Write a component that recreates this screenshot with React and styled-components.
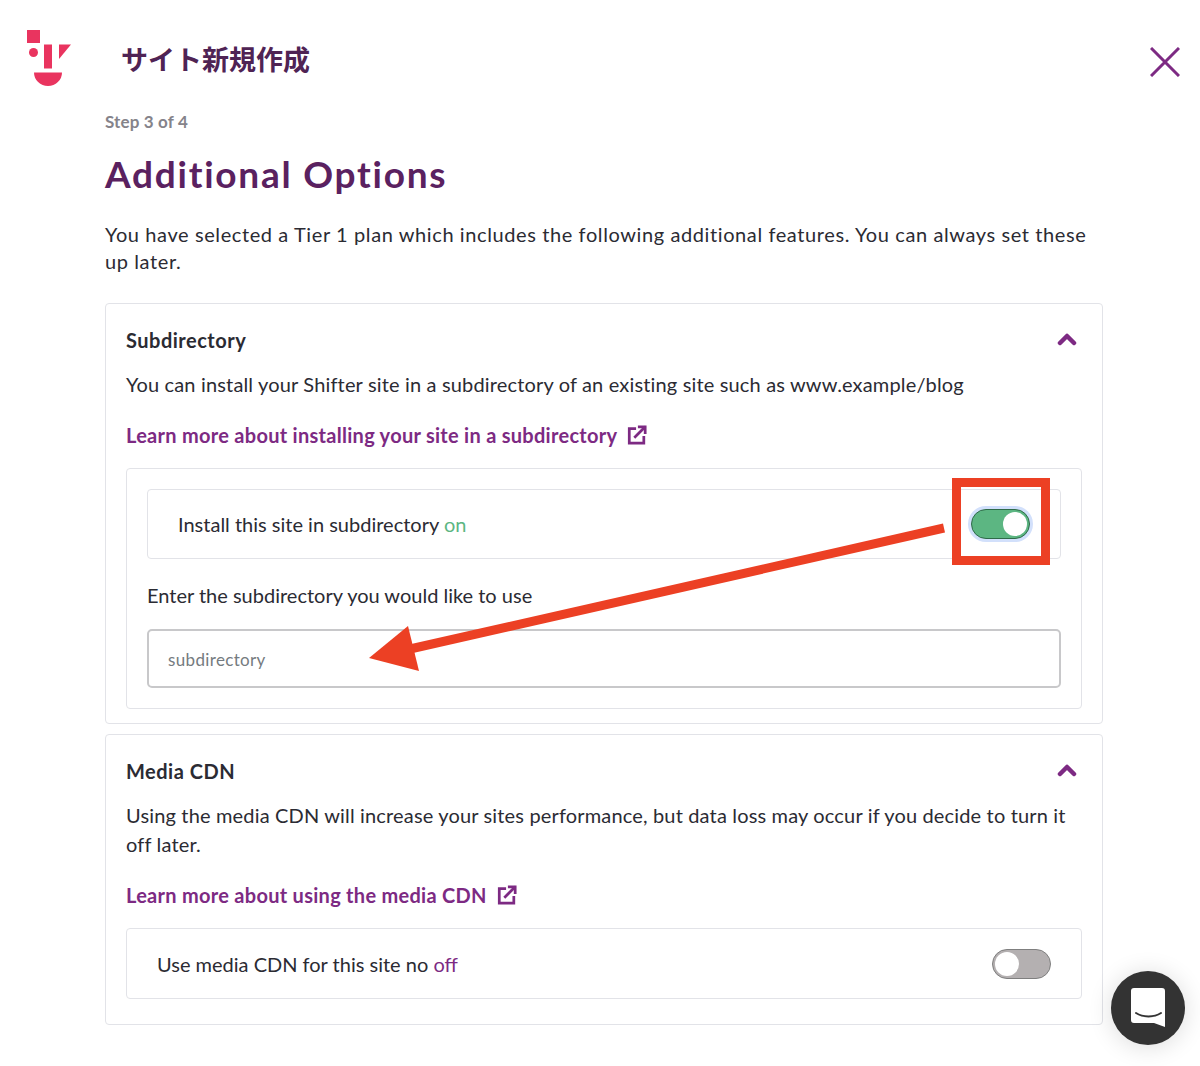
import React from "react";
import styled, { createGlobalStyle } from "styled-components";

const Global = createGlobalStyle`
  html, body { margin: 0; padding: 0; background: #fff; }
  * { box-sizing: border-box; }
`;

const Page = styled.div`
  position: relative;
  width: 1200px;
  height: 1066px;
  overflow: hidden;
  font-family: "Lato", "Noto Sans CJK JP", sans-serif;
  color: #2b2b33;
`;

const Header = styled.header`
  display: flex;
  align-items: flex-start;
  padding: 30px 20px 0 27px;
  height: 110px;
`;

const Logo = styled.svg`
  width: 44px;
  height: 56px;
  flex: none;
`;

const SiteTitle = styled.div`
  margin: 11px 0 0 50px;
  font-family: "Noto Sans CJK JP", sans-serif;
  font-size: 27px;
  line-height: 36px;
  font-weight: 700;
  color: #4f2354;
  flex: 1;
`;

const Close = styled.svg`
  width: 30px;
  height: 30px;
  margin-top: 17px;
  flex: none;
`;

const Main = styled.main`
  width: 998px;
  margin-left: 105px;
`;

const Step = styled.div`
  font-size: 17px;
  line-height: 24px;
  font-weight: 700;
  letter-spacing: 0.15px;
  color: #85838a;
`;

const Title = styled.h1`
  margin: 14px 0 0;
  font-size: 37px;
  line-height: 52px;
  font-weight: 700;
  letter-spacing: 1.75px;
  color: #5a2160;
`;

const Intro = styled.p`
  margin: 21px 0 28px;
  font-size: 20px;
  line-height: 27px;
  letter-spacing: 0.6px;
`;

const Card = styled.section`
  border: 1px solid #e2e3e8;
  border-radius: 4px;
  padding: 20px;
  height: ${(p) => p.$height}px;
  margin-bottom: 10px;
`;

const CardHead = styled.div`
  display: flex;
  align-items: center;
  justify-content: space-between;
  height: 32px;
`;

const CardTitle = styled.h2`
  margin: 0;
  font-size: 20px;
  line-height: 32px;
  font-weight: 700;
  letter-spacing: 0.5px;
`;

const Chevron = styled.svg`
  width: 22px;
  height: 14px;
  margin: -3px 4px 0 0;
`;

const Text = styled.p`
  margin: 14px 0 0;
  font-size: 20px;
  line-height: 29px;
  letter-spacing: 0.16px;
`;

const LearnLink = styled.a`
  display: flex;
  align-items: center;
  gap: 10px;
  margin-top: 21px;
  font-size: 20px;
  line-height: 30px;
  font-weight: 700;
  letter-spacing: 0.28px;
  color: #7d2a83;
`;

const Box = styled.div`
  border: 1px solid #e2e3e8;
  border-radius: 4px;
  margin-top: 18px;
  padding: ${(p) => (p.$flat ? "0" : "20px")};
`;

const ToggleRow = styled.div`
  display: flex;
  align-items: center;
  justify-content: space-between;
  height: ${(p) => (p.$flat ? "69px" : "70px")};
  padding: 0 30px;
  border: ${(p) => (p.$flat ? "0" : "1px solid #e2e3e8")};
  border-radius: 4px;
  font-size: 20px;
`;

const State = styled.span`
  color: ${(p) => p.$color};
`;

const Switch = styled.div`
  position: relative;
  width: 59px;
  height: 30px;
  border-radius: 15px;
  border: 1px solid ${(p) => (p.$on ? "#2f6b49" : "#7f7f7f")};
  background: ${(p) => (p.$on ? "#5cb682" : "#b4b0b1")};
  box-shadow: ${(p) => (p.$on ? "0 0 0 3px #d2e0fb" : "none")};
  flex: none;
`;

const Knob = styled.div`
  position: absolute;
  top: 2px;
  ${(p) => (p.$on ? "right: 2px;" : "left: 2px;")}
  width: 24px;
  height: 24px;
  border-radius: 50%;
  background: #fff;
`;

const FieldLabel = styled.div`
  margin-top: 21px;
  font-size: 20px;
  line-height: 30px;
`;

const Input = styled.input`
  display: block;
  width: 100%;
  height: 59px;
  margin-top: 19px;
  padding: 2px 19px 0;
  border: 2px solid #c8c8ca;
  border-radius: 5px;
  font-family: inherit;
  font-size: 17px;
  letter-spacing: 0.35px;
  &::placeholder { color: #757b80; opacity: 1; }
`;

const RedFrame = styled.div`
  position: absolute;
  left: 952px;
  top: 478px;
  width: 98px;
  height: 87px;
  border: 9px solid #ec4024;
`;

const Arrow = styled.svg`
  position: absolute;
  left: 360px;
  top: 520px;
  width: 600px;
  height: 160px;
`;

const Chat = styled.div`
  position: absolute;
  left: 1111px;
  top: 971px;
  width: 74px;
  height: 74px;
  border-radius: 50%;
  background: #333;
  box-shadow: 0 2px 24px rgba(0, 0, 0, 0.14);
  display: flex;
  align-items: center;
  justify-content: center;
`;

const ChatIcon = styled.svg`
  width: 36px;
  height: 40px;
`;

const ExternalIcon = () => (
  <svg width="20" height="20" viewBox="0 0 22 22" fill="none" stroke="#7d2a83" strokeWidth="3">
    <path d="M10 4H2.500v16h16v-8" />
    <path d="M8 14 20 2" />
    <path d="M12 2h8v8" />
  </svg>
);

const Up = () => (
  <Chevron viewBox="0 0 22 14" fill="none" stroke="#7d2a83" strokeWidth="4.500" strokeLinecap="round" strokeLinejoin="round">
    <path d="M4 11 11 4l7 7" />
  </Chevron>
);

export default function App() {
  return (
    <Page>
      <Global />
      <Header>
        <Logo viewBox="0 0 44 56">
          <rect width="13" height="13" fill="#e9345f" />
          <circle cx="6.500" cy="22.500" r="4.500" fill="#e9345f" />
          <rect x="17" y="14.500" width="8" height="24" fill="#e9345f" />
          <path d="M32 14.500h12L32 29z" fill="#e9345f" />
          <path d="M7 42.500h28a14 13.500 0 0 1-28 0z" fill="#e9345f" />
        </Logo>
        <SiteTitle>サイト新規作成</SiteTitle>
        <Close viewBox="0 0 30 30" stroke="#7d2a83" strokeWidth="3" fill="none">
          <path d="M1 1l28 28M29 1 1 29" />
        </Close>
      </Header>
      <Main>
        <Step>Step 3 of 4</Step>
        <Title>Additional Options</Title>
        <Intro>
          You have selected a Tier 1 plan which includes the following additional features. You can always set these up later.
        </Intro>
        <Card $height={421}>
          <CardHead>
            <CardTitle>Subdirectory</CardTitle>
            <Up />
          </CardHead>
          <Text>You can install your Shifter site in a subdirectory of an existing site such as www.example/blog</Text>
          <LearnLink>
            Learn more about installing your site in a subdirectory
            <ExternalIcon />
          </LearnLink>
          <Box>
            <ToggleRow>
              <span>
                Install this site in subdirectory <State $color="#5cb682">on</State>
              </span>
              <Switch $on>
                <Knob $on />
              </Switch>
            </ToggleRow>
            <FieldLabel>Enter the subdirectory you would like to use</FieldLabel>
            <Input placeholder="subdirectory" />
          </Box>
        </Card>
        <Card $height={291}>
          <CardHead>
            <CardTitle>Media CDN</CardTitle>
            <Up />
          </CardHead>
          <Text>
            Using the media CDN will increase your sites performance, but data loss may occur if you decide to turn it off later.
          </Text>
          <LearnLink>
            Learn more about using the media CDN
            <ExternalIcon />
          </LearnLink>
          <Box $flat>
            <ToggleRow $flat>
              <span>
                Use media CDN for this site no <State $color="#7d2a83">off</State>
              </span>
              <Switch>
                <Knob />
              </Switch>
            </ToggleRow>
          </Box>
        </Card>
      </Main>
      <RedFrame />
      <Arrow viewBox="0 0 600 160">
        <path d="M584 8 50 129" stroke="#ec4024" strokeWidth="9" fill="none" />
        <path d="M9 138 48 106 59 151z" fill="#ec4024" />
      </Arrow>
      <Chat>
        <ChatIcon viewBox="0 0 36 40">
          <path d="M4 0h28a3 3 0 0 1 3 3v36l-11-4H4a3 3 0 0 1-3-3V3a3 3 0 0 1 3-3z" fill="#fff" />
          <path d="M6 25c7 4.500 18 4.500 25 0" stroke="#333" strokeWidth="2" fill="none" strokeLinecap="round" />
        </ChatIcon>
      </Chat>
    </Page>
  );
}
